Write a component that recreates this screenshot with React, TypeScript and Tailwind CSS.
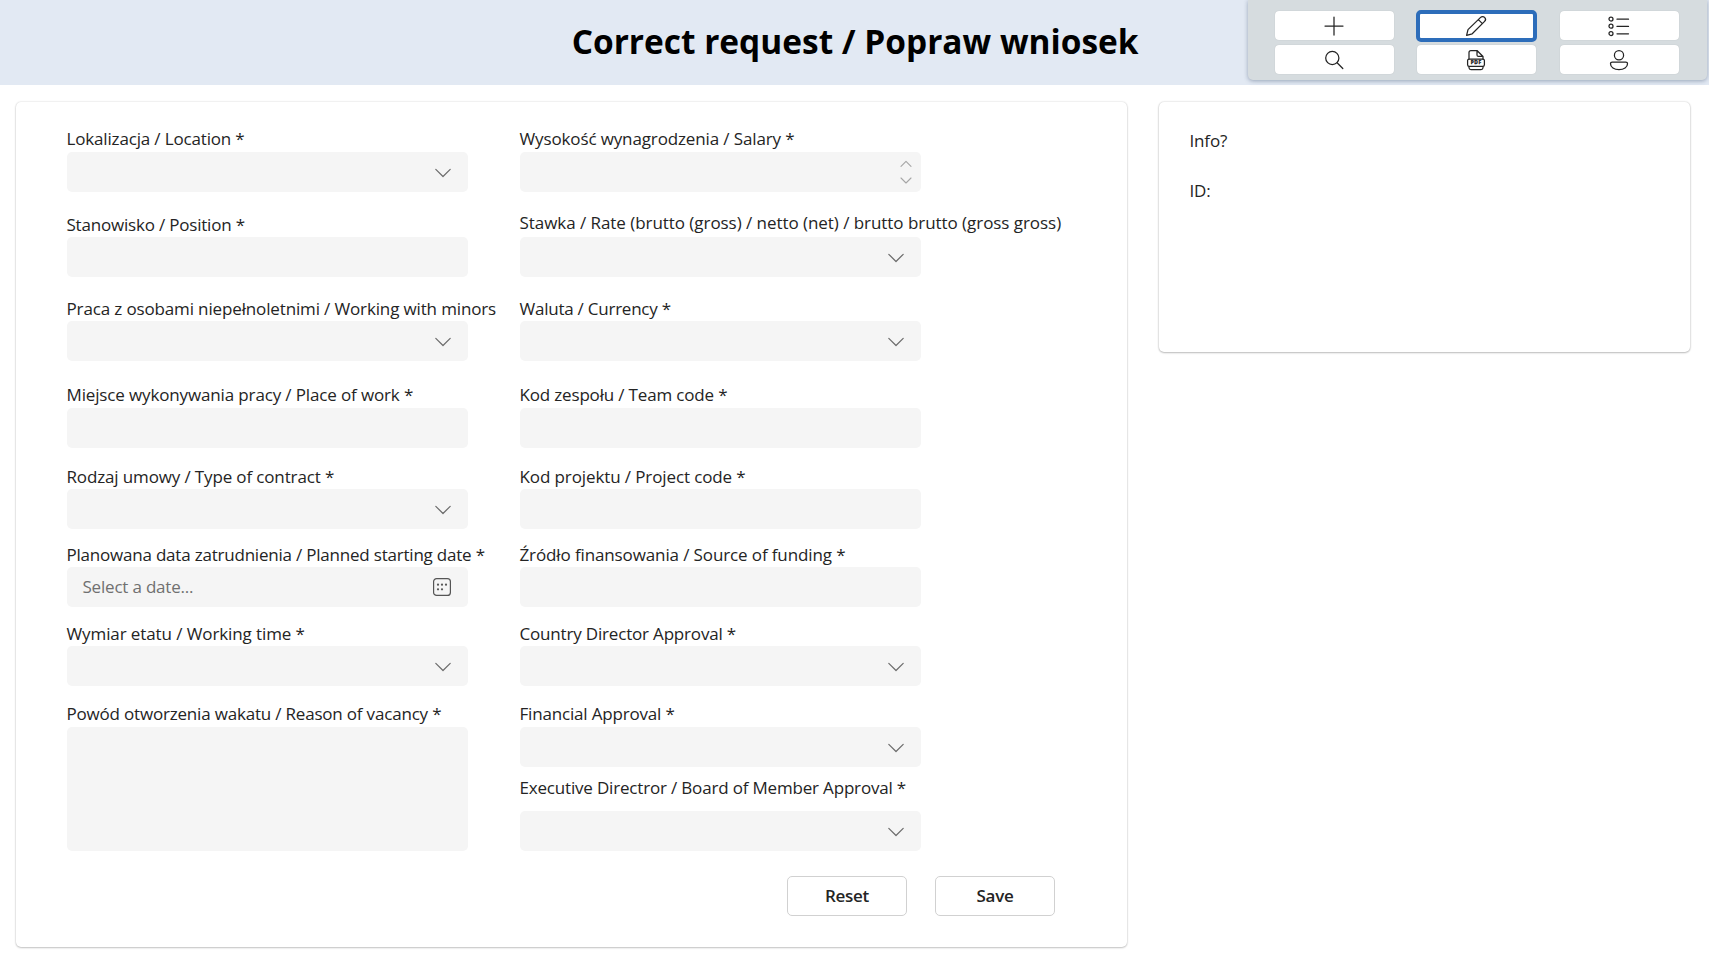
import type { ReactNode } from 'react';

type Kind = 'text' | 'select' | 'number' | 'date' | 'area';

interface FieldProps {
  label: string;
  kind: Kind;
  spacing: string;
  tracking: string;
}

const leftFields: FieldProps[] = [
  { label: 'Lokalizacja / Location *', kind: 'select', spacing: 'gap-[2px]', tracking: 'tracking-[-0.16px]' },
  { label: 'Stanowisko / Position *', kind: 'text', spacing: 'mt-5 gap-[1px]', tracking: 'tracking-[-0.2px]' },
  { label: 'Praca z osobami niepełnoletnimi / Working with minors', kind: 'select', spacing: 'mt-[19px] gap-[1px]', tracking: 'tracking-[-0.14px]' },
  { label: 'Miejsce wykonywania pracy / Place of work *', kind: 'text', spacing: 'mt-[21px] gap-[2px]', tracking: 'tracking-[-0.14px]' },
  { label: 'Rodzaj umowy / Type of contract *', kind: 'select', spacing: 'mt-4 gap-[1px]', tracking: 'tracking-[-0.14px]' },
  { label: 'Planowana data zatrudnienia / Planned starting date *', kind: 'date', spacing: 'mt-[13px] gap-[1px]', tracking: 'tracking-[-0.21px]' },
  { label: 'Wymiar etatu / Working time *', kind: 'select', spacing: 'mt-[14px] gap-[1px]', tracking: 'tracking-[-0.1px]' },
  { label: 'Powód otworzenia wakatu / Reason of vacancy *', kind: 'area', spacing: 'mt-[15px] gap-[2px]', tracking: 'tracking-[-0.19px]' },
];

const rightFields: FieldProps[] = [
  { label: 'Wysokość wynagrodzenia / Salary *', kind: 'number', spacing: 'gap-[2px]', tracking: 'tracking-[-0.13px]' },
  { label: 'Stawka / Rate (brutto (gross) / netto (net) / brutto brutto (gross gross)', kind: 'select', spacing: 'mt-[18px] gap-[3px]', tracking: 'tracking-[-0.05px]' },
  { label: 'Waluta / Currency *', kind: 'select', spacing: 'mt-[19px] gap-[1px]', tracking: 'tracking-[-0.24px]' },
  { label: 'Kod zespołu / Team code *', kind: 'text', spacing: 'mt-[21px] gap-[2px]', tracking: 'tracking-[-0.17px]' },
  { label: 'Kod projektu / Project code *', kind: 'text', spacing: 'mt-4 gap-[1px]', tracking: 'tracking-[-0.11px]' },
  { label: 'Źródło finansowania / Source of funding *', kind: 'text', spacing: 'mt-[13px] gap-[1px]', tracking: 'tracking-[-0.12px]' },
  { label: 'Country Director Approval *', kind: 'select', spacing: 'mt-[14px] gap-[1px]', tracking: 'tracking-[-0.18px]' },
  { label: 'Financial Approval *', kind: 'select', spacing: 'mt-[15px] gap-[2px]', tracking: 'tracking-[-0.18px]' },
  { label: 'Executive Directror / Board of Member Approval *', kind: 'select', spacing: 'mt-2 gap-3', tracking: 'tracking-[-0.18px]' },
];

function Chevron() {
  return (
    <svg width="16" height="10" viewBox="0 0 16 10" fill="none" stroke="#6b6b6b" strokeWidth="1.2" strokeLinecap="round" strokeLinejoin="round" className="mt-px">
      <path d="M0.8 1.3 8 8.5l7.2-7.2" />
    </svg>
  );
}

function Stepper() {
  return (
    <svg width="12" height="24" viewBox="0 0 12 24" fill="none" stroke="#a6a6a6" strokeWidth="1.1" strokeLinecap="round" strokeLinejoin="round">
      <path d="M1 6.3 6 1.3l5 5M1 18l5 5 5-5" />
    </svg>
  );
}

function CalendarIcon() {
  return (
    <svg width="18" height="18" viewBox="0 0 18 18" fill="none">
      <rect x="0.6" y="0.6" width="16.8" height="16.8" rx="3" stroke="#555" strokeWidth="1.2" />
      <g fill="#555">
        <circle cx="5" cy="6.7" r="1.1" />
        <circle cx="9" cy="6.7" r="1.1" />
        <circle cx="13" cy="6.7" r="1.1" />
        <circle cx="5" cy="11.3" r="1.1" />
        <circle cx="9" cy="11.3" r="1.1" />
      </g>
    </svg>
  );
}

function Field({ label, kind, spacing, tracking }: FieldProps) {
  return (
    <div className={`flex w-[401px] flex-col ${spacing}`}>
      <label className={`h-6 text-[17px] leading-[26px] whitespace-nowrap ${tracking}`}>{label}</label>
      {kind === 'area' ? (
        <div className="h-[124px] rounded-[5px] bg-[#f5f5f5]" />
      ) : (
        <div className="flex h-10 items-center rounded-[5px] bg-[#f5f5f5]">
          {kind === 'date' && (
            <span className="pl-4 text-[17px] leading-6 tracking-[-0.2px] text-[#707070]">Select a date...</span>
          )}
          {kind === 'select' && <span className="ml-auto pr-[17px]"><Chevron /></span>}
          {kind === 'date' && <span className="ml-auto pr-[17px]"><CalendarIcon /></span>}
          {kind === 'number' && <span className="ml-auto pr-[9px]"><Stepper /></span>}
        </div>
      )}
    </div>
  );
}

function Tool({ active, name, children }: { active?: boolean; name: string; children: ReactNode }) {
  return (
    <button
      aria-label={name}
      className={
        active
          ? '-mx-px -mt-px -mb-[2px] flex h-8 items-center justify-center rounded-[5px] border-4 border-[#2d6dba] bg-white'
          : 'flex h-[29px] items-center justify-center rounded-[4px] bg-white shadow-[0_0_1px_rgba(0,0,0,0.2)]'
      }
    >
      <svg width="24" height="24" viewBox="0 0 24 24" fill="none" stroke="#242424" strokeWidth="1.25" strokeLinecap="round" strokeLinejoin="round" className="mr-px shrink-0">
        {children}
      </svg>
    </button>
  );
}

function Toolbar() {
  return (
    <div className="mr-[2px] grid h-[80px] w-[459px] grid-cols-[119px_119px_119px] content-start gap-x-[23.5px] gap-y-[5px] rounded-b-[5px] bg-[#d6dcdf] pt-[11px] pl-[26.5px] shadow-[0_1px_4px_rgba(60,80,110,0.45)]">
      <Tool name="New"><path d="M12 3v18M3 12h18" /></Tool>
      <Tool name="Edit" active>
        <path d="M2.6 21.4 4 15.6 16.6 3.4a2.8 2.8 0 0 1 4 4L8.2 19.8ZM14.4 5.6l4 4" />
      </Tool>
      <Tool name="List">
        <circle cx="4" cy="5" r="2" /><circle cx="4" cy="12.2" r="2" /><circle cx="4" cy="19.5" r="2" />
        <path d="M10 5.2h11.5M10 12.4h11.5M10 19.8h11.5" />
      </Tool>
      <Tool name="Search">
        <circle cx="10.3" cy="10" r="6.6" /><path d="m15.1 14.8 5.7 5.7" />
      </Tool>
      <Tool name="PDF">
        <path d="M5 11V4.5a2 2 0 0 1 2-2h6l6 6V11M13 2.7v4.2a1.5 1.5 0 0 0 1.5 1.5H19M5 18.5v1.2A2 2 0 0 0 7 21.6h10a2 2 0 0 0 2-1.9v-1.2" />
        <rect x="3.6" y="11" width="16.8" height="7.4" rx="1.6" />
        <text x="12.2" y="16.4" textAnchor="middle" fontSize="4.8" fontWeight="700" letterSpacing="0.5" fontFamily="Open Sans, sans-serif" fill="#242424" strokeWidth="0.4">PDF</text>
      </Tool>
      <Tool name="Account">
        <circle cx="12" cy="7.2" r="4.6" />
        <path d="M5.2 14h13.6a1.7 1.7 0 0 1 1.7 1.7c0 3.5-3.6 5.9-8.5 5.9s-8.5-2.4-8.5-5.9A1.7 1.7 0 0 1 5.2 14Z" />
      </Tool>
    </div>
  );
}

export default function App() {
  return (
    <div className="flex h-[956px] w-[1709px] flex-col overflow-hidden bg-white font-['Open_Sans','Noto_Sans',sans-serif] text-[#242424]">
      <header className="flex h-[85px] shrink-0 items-start justify-end bg-[#e2e9f3]">
        <h1 className="mr-[109.5px] pt-[18px] text-[33.45px] leading-[46px] font-bold whitespace-nowrap text-black">Correct request / Popraw wniosek</h1>
        <Toolbar />
      </header>
      <main className="flex items-start gap-8 pt-[17px] pl-4">
        <section className="flex h-[845px] w-[1111px] flex-col rounded-[5px] bg-white pt-6 pl-[50.5px] shadow-[0_0_2px_rgba(0,0,0,0.18),0_1px_2px_rgba(0,0,0,0.2)]">
          <div className="flex gap-[52px]">
            <div>{leftFields.map((f) => <Field key={f.label} {...f} />)}</div>
            <div>{rightFields.map((f) => <Field key={f.label} {...f} />)}</div>
          </div>
          <div className="mt-[25px] flex justify-end gap-7 pr-[72px]">
            <button className="h-10 w-[120px] rounded-[5px] border border-[#d1d1d1] bg-white text-[17px] font-semibold tracking-[-0.3px]">Reset</button>
            <button className="h-10 w-[120px] rounded-[5px] border border-[#d1d1d1] bg-white text-[17px] font-semibold tracking-[-0.3px]">Save</button>
          </div>
        </section>
        <aside className="flex h-[250px] w-[531px] flex-col gap-[26px] rounded-[5px] bg-white pt-[27px] pl-[30.5px] text-[17px] leading-6 tracking-[-0.15px] shadow-[0_0_2px_rgba(0,0,0,0.22),0_1px_2px_rgba(0,0,0,0.22)]">
          <p>Info?</p>
          <p>ID:</p>
        </aside>
      </main>
    </div>
  );
}
